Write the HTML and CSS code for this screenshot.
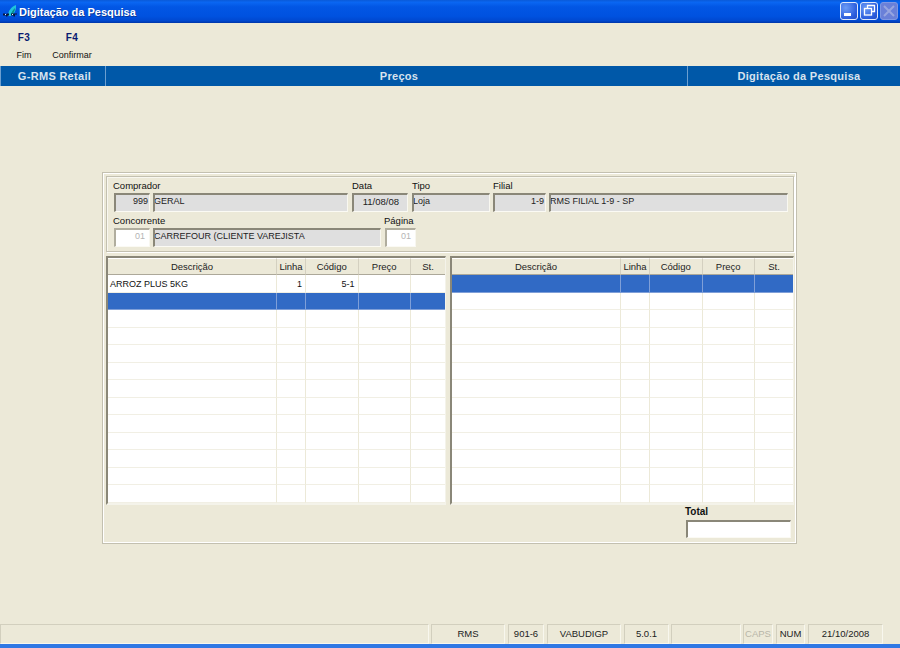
FILE: index.html
```html
<!DOCTYPE html>
<html lang="pt">
<head>
<meta charset="utf-8">
<title>Digitação da Pesquisa</title>
<link rel="stylesheet" href="styles.css">
</head>
<body>
<div class="window">
  <header class="titlebar">
    <svg class="app-icon" width="16" height="16" viewBox="0 0 16 16"><path d="M6 12 C6 7 9 3 14 1 C14.500 6 12 10 9 12Z" fill="#1fc4dc"/><path d="M9 11 C9 8 11 6 13 4 C13 7 11 10 10 11Z" fill="#0a8a8a"/><path d="M1 9.500h2l1 1 1-1h2v2H5.500v1H4v-1H1ZM9 9.500h6v1h-2v2h-1.500v-1H9Z" fill="#08163c"/><path d="M3 10.500h1M10 10.500h1" stroke="#e8f2ff" stroke-width="1"/></svg>
    <span class="title">Digitação da Pesquisa</span>
    <div class="winbtns">
      <div class="winbtn"><svg width="16" height="16" viewBox="0 0 16 16"><rect x="3" y="10" width="7" height="3" fill="#fff"/></svg></div>
      <div class="winbtn"><svg width="16" height="16" viewBox="0 0 16 16"><path d="M6.500 5V2.500H13.500V8.500H11" fill="none" stroke="#fff" stroke-width="1.300"/><rect x="3.500" y="5.500" width="7" height="6.500" fill="none" stroke="#fff" stroke-width="1.300"/></svg></div>
      <div class="winbtn disabled"><svg width="16" height="16" viewBox="0 0 16 16"><path d="M3 3L13 13M13 3L3 13" stroke="#97a5e0" stroke-width="2"/></svg></div>
    </div>
  </header>

  <nav class="toolbar">
    <div class="tool t1"><b>F3</b><span>Fim</span></div>
    <div class="tool t2"><b>F4</b><span>Confirmar</span></div>
  </nav>

  <div class="band">
    <div class="band-cell b1">G-RMS Retail</div>
    <div class="band-cell b2">Preços</div>
    <div class="band-cell b3">Digitação da Pesquisa</div>
  </div>

  <main class="content">
    <section class="panel">
      <div class="group">
        <div class="frow r1">
          <div class="fcol c-comp"><label>Comprador</label><div class="pair"><div class="field code right">999</div><div class="field grow">GERAL</div></div></div>
          <div class="fcol c-data"><label>Data</label><div class="field right pad">11/08/08</div></div>
          <div class="fcol c-tipo"><label>Tipo</label><div class="field">Loja</div></div>
          <div class="fcol c-fil"><label>Filial</label><div class="pair"><div class="field filcode right">1-9</div><div class="field grow">RMS FILIAL 1-9 - SP</div></div></div>
        </div>
        <div class="frow r2">
          <div class="fcol c-conc"><label>Concorrente</label><div class="pair"><div class="field code right light">01</div><div class="field grow">CARREFOUR (CLIENTE VAREJISTA</div></div></div>
          <div class="fcol c-pag"><label>Página</label><div class="field right light">01</div></div>
        </div>
      </div>

      <div class="grids">
        <table class="grid">
          <colgroup><col class="cd"><col class="cl"><col class="cc"><col class="cp"><col class="cs"></colgroup>
          <thead><tr><th>Descrição</th><th>Linha</th><th>Código</th><th>Preço</th><th>St.</th></tr></thead>
          <tbody>
            <tr><td>ARROZ PLUS 5KG</td><td class="num">1</td><td class="num">5-1</td><td></td><td></td></tr>
            <tr class="sel"><td></td><td></td><td></td><td></td><td></td></tr>
            <tr><td></td><td></td><td></td><td></td><td></td></tr>
            <tr><td></td><td></td><td></td><td></td><td></td></tr>
            <tr><td></td><td></td><td></td><td></td><td></td></tr>
            <tr><td></td><td></td><td></td><td></td><td></td></tr>
            <tr><td></td><td></td><td></td><td></td><td></td></tr>
            <tr><td></td><td></td><td></td><td></td><td></td></tr>
            <tr><td></td><td></td><td></td><td></td><td></td></tr>
            <tr><td></td><td></td><td></td><td></td><td></td></tr>
            <tr><td></td><td></td><td></td><td></td><td></td></tr>
            <tr><td></td><td></td><td></td><td></td><td></td></tr>
            <tr><td></td><td></td><td></td><td></td><td></td></tr>
          </tbody>
        </table>
        <table class="grid">
          <colgroup><col class="cd"><col class="cl"><col class="cc"><col class="cp"><col class="cs"></colgroup>
          <thead><tr><th>Descrição</th><th>Linha</th><th>Código</th><th>Preço</th><th>St.</th></tr></thead>
          <tbody>
            <tr class="sel"><td></td><td></td><td></td><td></td><td></td></tr>
            <tr><td></td><td></td><td></td><td></td><td></td></tr>
            <tr><td></td><td></td><td></td><td></td><td></td></tr>
            <tr><td></td><td></td><td></td><td></td><td></td></tr>
            <tr><td></td><td></td><td></td><td></td><td></td></tr>
            <tr><td></td><td></td><td></td><td></td><td></td></tr>
            <tr><td></td><td></td><td></td><td></td><td></td></tr>
            <tr><td></td><td></td><td></td><td></td><td></td></tr>
            <tr><td></td><td></td><td></td><td></td><td></td></tr>
            <tr><td></td><td></td><td></td><td></td><td></td></tr>
            <tr><td></td><td></td><td></td><td></td><td></td></tr>
            <tr><td></td><td></td><td></td><td></td><td></td></tr>
            <tr><td></td><td></td><td></td><td></td><td></td></tr>
          </tbody>
        </table>
      </div>

      <div class="total">
        <label>Total</label>
        <div class="field white"></div>
      </div>
    </section>
  </main>

  <footer class="status">
    <div class="st s0"></div>
    <div class="st s1">RMS</div>
    <div class="st s2">901-6</div>
    <div class="st s3">VABUDIGP</div>
    <div class="st s4">5.0.1</div>
    <div class="st s5"></div>
    <div class="st s6 off">CAPS</div>
    <div class="st s7">NUM</div>
    <div class="st s8">21/10/2008</div>
  </footer>
  <div class="bottom"></div>
</div>
</body>
</html>
```
FILE: styles.css
```css
* { box-sizing: border-box; }
html, body { margin: 0; padding: 0; }
body {
  width: 900px; height: 648px; overflow: hidden;
  background: #ece9d8; color: #111;
  font: 10px/12px "Liberation Sans", Arial, sans-serif;
}
.window { display: flex; flex-direction: column; width: 900px; height: 648px; }

.titlebar {
  height: 23px; flex: none; display: flex; align-items: center; padding: 0 2px 0 2px;
  background: linear-gradient(180deg, #0a5ad8 0%, #0a66f2 10%, #0256e4 30%, #0052e0 70%, #0048d0 90%, #0036a8 100%);
}
.app-icon { flex: none; }
.title { margin-left: 1px; color: #fff; font: bold 11px/14px "Liberation Sans", Arial, sans-serif; text-shadow: 1px 1px 0 #0a3a9c; }
.winbtns { margin-left: auto; display: flex; gap: 2px; align-self: flex-start; margin-top: 2px; }
.winbtn {
  width: 18px; height: 18px; border: 1px solid #dfe8fb; border-radius: 3px; overflow: hidden;
  background: radial-gradient(circle at 30% 30%, #6c9cf6, #2a5cdc 70%, #2450c8);
}
.winbtn svg { display: block; }
.winbtn.disabled { background: #6a80d8; border-color: #7f97e2; }

.toolbar { height: 43px; flex: none; display: flex; }
.tool { display: flex; flex-direction: column; align-items: center; }
.tool b { margin-top: 9px; color: #0a1a70; font: bold 10px/12px "Liberation Sans", Arial, sans-serif; letter-spacing: .3px; }
.tool span { margin-top: 5px; font-size: 9px; line-height: 12px; }
.t1 { width: 48px; }
.t2 { width: 48px; }

.band { height: 20px; flex: none; display: flex; background: #0058a8; }
.band-cell {
  color: #d8e3ee; font: bold 11px/20px "Liberation Sans", Arial, sans-serif; letter-spacing: .3px;
  text-align: center; border-left: 1px solid #6c9fd0; border-right: 1px solid #6c9fd0;
}
.b1 { width: 106px; padding-left: 3px; }
.b2 { width: 581px; padding-left: 5px; border-left: 0; border-right: 0; }
.b3 { width: 213px; padding-left: 10px; border-right: 0; }

.content { flex: 1; padding: 86px 0 0 102px; }
.panel {
  width: 695px; height: 372px; padding: 3px 3px 0 3px;
  border: 1px solid #c3c0b0; box-shadow: inset 1px 1px 0 #fff, inset -1px -1px 0 #fff;
}
.group {
  width: 688px; height: 76px; padding: 3px 0 0 7px;
  border: 1px solid #c3c0b0; box-shadow: inset 1px 1px 0 #f8f7f0, 1px 1px 0 #fff;
}
.frow { display: flex; }
.r1 { height: 37px; }
.r2 { margin-top: -2px; }
.fcol { display: flex; flex-direction: column; }
.fcol label { height: 13px; line-height: 12px; font-size: 9.5px; display: block; }
.pair { display: flex; gap: 3px; }
.field {
  height: 19px; padding: 0; font-size: 9px; line-height: 13px; white-space: nowrap; overflow: hidden;
  background: #dfdfdf; color: #222; text-indent: -1px;
  border-style: solid; border-width: 2px 1px 1px 2px;
  border-color: #8a8778 #f8f7f0 #fbfaf4 #8a8778;
}
.grow { flex: 1; }
.right { text-align: right; padding-right: 1px; text-indent: 0; }
.pad { padding-right: 8px; font-size: 9.5px; }
.code { width: 36px; }
.filcode { width: 53px; }
.light { background: #fff; color: #b4b4b4; }
.white { background: #fff; }
.c-comp { width: 234px; margin-right: 4px; }
.c-data { width: 56px; margin-right: 4px; }
.c-tipo { width: 78px; margin-right: 3px; }
.c-fil { width: 295px; }
.c-conc { width: 267px; margin-right: 4px; }
.c-pag { width: 31px; }
.c-comp label, .c-conc label { margin-left: -1px; }
.c-pag label { margin-left: -1px; width: 40px; white-space: nowrap; }
.field.light { border-color: #b0ad9e #f8f7f0 #fbfaf4 #b0ad9e; }
.field.light.right { padding-right: 4px; }
.code.right { padding-right: 1px; }

.grids { display: flex; gap: 4px; margin-top: 4px; }
.grid {
  width: 340px; height: 248px; border-collapse: separate; border-spacing: 0; table-layout: fixed;
  border-style: solid; border-width: 2px 1px 2px 2px;
  border-color: #8a8778 #f4f3ea #f4f3ea #8a8778;
  background: #fff;
}
.grid + .grid { width: 344px; }
.cd { width: 169px; } .cl { width: 29px; } .cc { width: 52.5px; } .cp { width: 52.5px; } .cs { width: 34px; }
.grid + .grid .cd { width: 169px; }
.grid + .grid .cs { width: 38px; }
.grid th {
  height: 17px; padding: 0; background: #ece9d8; font: normal 9.500px/12px "Liberation Sans", Arial, sans-serif; color: #222;
  border-right: 1px solid #d4d0c0; border-bottom: 1px solid #aca899; border-top: 1px solid #fff;
}
.grid td {
  height: 17.5px; padding: 1px 2px 0; font-size: 9px; line-height: 12px; color: #111; white-space: nowrap;
  border-right: 1px solid #ece9d8; border-bottom: 1px solid #f1efe4;
}
.grid td.num { text-align: right; padding-right: 3px; }
.grid tr.sel td { background: #316ac5; border-right-color: #7f9fd8; border-bottom-color: #7f9fd8; }
.grid th:last-child, .grid td:last-child { border-right: 0; }

.total { width: 105px; margin: 1px 0 0 580px; }
.total label { display: block; height: 14px; margin-left: -1px; font: bold 10px/12px "Liberation Sans", Arial, sans-serif; }
.total .field { height: 18px; }

.status { height: 20px; flex: none; display: flex; gap: 3px; font-size: 9.500px; line-height: 18px; }
.st {
  height: 20px; text-align: center; color: #222;
  border: 1px solid; border-color: #d2cfbe #f8f7ee #f8f7ee #d2cfbe;
}
.s0 { width: 429px; }
.s1 { width: 74px; margin-left: -1px; }
.s2 { width: 36px; }
.s3 { width: 74px; }
.s4 { width: 45px; }
.s5 { width: 70px; margin-left: -1px; }
.s6 { width: 30px; margin-left: -1px; }
.s7 { width: 29px; }
.s8 { width: 75px; }
.off { color: #b8b6a8; }

.bottom { height: 4px; flex: none; background: #2f78e4; }
```
